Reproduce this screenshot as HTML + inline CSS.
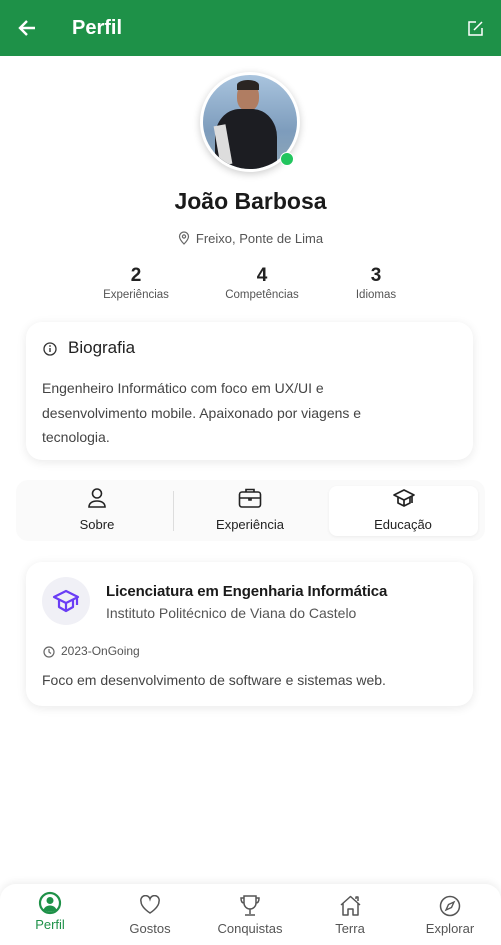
<!DOCTYPE html>
<html><head><meta charset="utf-8"><style>
*{margin:0;padding:0;box-sizing:border-box}
body{width:501px;height:945px;background:#fff;font-family:"Liberation Sans",sans-serif;position:relative;overflow:hidden;color:#222}
.abs{position:absolute}
.hdr{left:0;top:0;width:501px;height:56px;background:#1E9148}
.card{background:#fff;border-radius:16px;box-shadow:0 2px 10px rgba(0,0,0,.09)}
.c{text-align:center}
</style></head><body>
<div class="abs hdr">
<svg class="abs" style="left:17px;top:18px" width="20" height="20" viewBox="0 0 20 20"><path d="M18 10H3M10 3L3 10l7 7" stroke="#fff" stroke-width="2.4" fill="none"/></svg>
<div class="abs" style="left:72px;top:17px;color:#fff;font-size:20px;font-weight:bold">Perfil</div>
<svg class="abs" style="left:467px;top:20px" width="17" height="17" viewBox="0 0 17 17"><path d="M9 2H2v13h13V8" stroke="#fff" stroke-width="1.5" fill="none"/><path d="M7 10l8-8" stroke="#fff" stroke-width="1.5"/></svg>
</div>
<div class="abs" style="left:200px;top:72px;width:100px;height:100px;border-radius:50%;background:#fff;box-shadow:0 2px 8px rgba(0,0,0,.2)"></div>
<div class="abs" style="left:203px;top:75px;width:94px;height:94px;border-radius:50%;overflow:hidden;background:linear-gradient(#a9c4de,#7d9cbc 60%,#8fa7b8)">
<div class="abs" style="left:34px;top:8px;width:22px;height:28px;border-radius:45%;background:#b07d62"></div>
<div class="abs" style="left:34px;top:5px;width:22px;height:10px;border-radius:50% 50% 0 0;background:#2a2522"></div>
<div class="abs" style="left:12px;top:34px;width:62px;height:70px;border-radius:40% 40% 0 0;background:#1c1d22"></div>
<div class="abs" style="left:14px;top:50px;width:12px;height:40px;background:#ddd;transform:rotate(-10deg)"></div>
</div>
<div class="abs" style="left:280px;top:152px;width:14px;height:14px;border-radius:50%;background:#22c55e;border:1px solid #fff"></div>
<div class="abs c" style="left:0;width:501px;top:188px;font-size:23px;font-weight:bold;color:#1a1a1a">João Barbosa</div>
<div class="abs c" style="left:0;width:501px;top:231px;font-size:13px;color:#555"><svg width="12" height="14" viewBox="0 0 12 14" style="vertical-align:-2px;margin-right:6px"><path d="M6 13s4.5-4.5 4.5-7.5a4.5 4.5 0 0 0-9 0C1.5 8.5 6 13 6 13z" stroke="#666" stroke-width="1.2" fill="none"/><circle cx="6" cy="5.5" r="1.6" stroke="#666" stroke-width="1.2" fill="none"/></svg>Freixo, Ponte de Lima</div>
<div class="abs c" style="left:86px;width:100px;top:265px;font-size:19px;font-weight:bold">2</div>
<div class="abs c" style="left:86px;width:100px;top:289px;font-size:11.5px;color:#555">Experiências</div>
<div class="abs c" style="left:212px;width:100px;top:265px;font-size:19px;font-weight:bold">4</div>
<div class="abs c" style="left:212px;width:100px;top:289px;font-size:11.5px;color:#555">Competências</div>
<div class="abs c" style="left:326px;width:100px;top:265px;font-size:19px;font-weight:bold">3</div>
<div class="abs c" style="left:326px;width:100px;top:289px;font-size:11.5px;color:#555">Idiomas</div>
<div class="abs card" style="left:26px;top:322px;width:447px;height:138px">
<svg class="abs" style="left:17px;top:20px" width="14" height="14" viewBox="0 0 14 14"><circle cx="7" cy="7" r="6" stroke="#333" stroke-width="1.3" fill="none"/><path d="M7 6v4" stroke="#333" stroke-width="1.4"/><circle cx="7" cy="4" r=".9" fill="#333"/></svg>
<div class="abs" style="left:42px;top:16px;font-size:17px;color:#222">Biografia</div>
<div class="abs" style="left:16px;top:54px;width:362px;font-size:14px;line-height:24.5px;color:#444">Engenheiro Informático com foco em UX/UI e desenvolvimento mobile. Apaixonado por viagens e tecnologia.</div>
</div>
<div class="abs" style="left:16px;top:480px;width:469px;height:61px;background:#fafafa;border-radius:12px"></div>
<div class="abs" style="left:173px;top:491px;width:1px;height:40px;background:#ddd"></div>
<div class="abs" style="left:329px;top:486px;width:149px;height:50px;background:#fff;border-radius:8px;box-shadow:0 1px 3px rgba(0,0,0,.06)"></div>
<svg class="abs" style="left:86px;top:487px" width="22" height="22" viewBox="0 0 22 22"><circle cx="11" cy="6.5" r="4.5" stroke="#222" stroke-width="1.6" fill="none"/><path d="M3 20c0-4 3.5-6 8-6s8 2 8 6z" stroke="#222" stroke-width="1.6" fill="none"/></svg>
<div class="abs c" style="left:47px;width:100px;top:517px;font-size:13px">Sobre</div>
<svg class="abs" style="left:238px;top:487px" width="24" height="22" viewBox="0 0 24 22"><rect x="1.5" y="5" width="21" height="15" rx="2.5" stroke="#222" stroke-width="1.6" fill="none"/><path d="M8 5V2.5h8V5M1.5 11h21M11 11v2h2v-2" stroke="#222" stroke-width="1.6" fill="none"/></svg>
<div class="abs c" style="left:200px;width:100px;top:517px;font-size:13px">Experiência</div>
<svg class="abs" style="left:392px;top:488px" width="24" height="20" viewBox="0 0 24 20"><path d="M12 2L2 7l10 5 10-5zM6 9v6l6 3 6-3V9M12 12v6M20 8v7" stroke="#222" stroke-width="1.7" fill="none" stroke-linejoin="round"/></svg>
<div class="abs c" style="left:353px;width:100px;top:517px;font-size:13px">Educação</div>
<div class="abs card" style="left:26px;top:562px;width:447px;height:144px">
<div class="abs" style="left:16px;top:15px;width:48px;height:48px;border-radius:50%;background:#f0f0f6"></div>
<svg class="abs" style="left:26px;top:26px" width="30" height="26" viewBox="0 0 30 26"><path d="M14 3L2 9l12 6 12-6zM7 12v7l7 4 7-4v-7M14 15v8M25 9v8" stroke="#6a3df5" stroke-width="2.2" fill="none" stroke-linejoin="round"/></svg>
<div class="abs" style="left:80px;top:21px;font-size:15px;font-weight:bold;color:#1a1a1a;letter-spacing:-0.1px">Licenciatura em Engenharia Informática</div>
<div class="abs" style="left:80px;top:43px;font-size:14px;color:#555">Instituto Politécnico de Viana do Castelo</div>
<svg class="abs" style="left:17px;top:84px" width="12" height="12" viewBox="0 0 12 12"><circle cx="6" cy="6" r="5" stroke="#666" stroke-width="1.2" fill="none"/><path d="M6 3v3l2 1.5" stroke="#666" stroke-width="1.2" fill="none"/></svg>
<div class="abs" style="left:35px;top:82px;font-size:12px;color:#555">2023-OnGoing</div>
<div class="abs" style="left:16px;top:110px;font-size:14px;color:#444">Foco em desenvolvimento de software e sistemas web.</div>
</div>
<div class="abs" style="left:0;top:884px;width:501px;height:61px;background:#fff;border-radius:16px 16px 0 0;box-shadow:0 -2px 8px rgba(0,0,0,.07)"></div>
<svg class="abs" style="left:38px;top:891px" width="24" height="24" viewBox="0 0 24 24"><circle cx="12" cy="12" r="10" stroke="#1E9148" stroke-width="2.2" fill="none"/><circle cx="12" cy="9.5" r="3.5" fill="#1E9148"/><path d="M5.5 18.5c1.5-3 4-4 6.5-4s5 1 6.5 4A10 10 0 0 1 5.5 18.5z" fill="#1E9148"/></svg>
<div class="abs c" style="left:20px;width:60px;top:917px;font-size:13px;color:#1E9148">Perfil</div>
<svg class="abs" style="left:139px;top:895px" width="22" height="20" viewBox="0 0 22 20"><path d="M11 18S2 12.5 2 6.5A4.5 4.5 0 0 1 11 4a4.5 4.5 0 0 1 9 2.5C20 12.5 11 18 11 18z" stroke="#555" stroke-width="1.5" fill="none"/></svg>
<div class="abs c" style="left:120px;width:60px;top:921px;font-size:13px;color:#555">Gostos</div>
<svg class="abs" style="left:239px;top:894px" width="22" height="24" viewBox="0 0 22 24"><path d="M5 2h12v7a6 6 0 0 1-12 0zM5 4H2c0 4 1.5 5 3 5M17 4h3c0 4-1.5 5-3 5M11 15v5M6 21h10" stroke="#555" stroke-width="1.5" fill="none"/></svg>
<div class="abs c" style="left:210px;width:80px;top:921px;font-size:13px;color:#555">Conquistas</div>
<svg class="abs" style="left:339px;top:894px" width="23" height="23" viewBox="0 0 23 23"><path d="M2 11L11.5 2.5 21 11M4 9v12h5v-6h5v6h5V9M17 5V3h2v4" stroke="#555" stroke-width="1.5" fill="none" stroke-linejoin="round"/></svg>
<div class="abs c" style="left:320px;width:60px;top:921px;font-size:13px;color:#555">Terra</div>
<svg class="abs" style="left:439px;top:895px" width="22" height="22" viewBox="0 0 22 22"><circle cx="11" cy="11" r="9.5" stroke="#555" stroke-width="1.5" fill="none"/><path d="M15 7l-2.5 5.5L7 15l2.5-5.5z" stroke="#555" stroke-width="1.4" fill="none"/></svg>
<div class="abs c" style="left:415px;width:70px;top:921px;font-size:13px;color:#555">Explorar</div>
</body></html>
